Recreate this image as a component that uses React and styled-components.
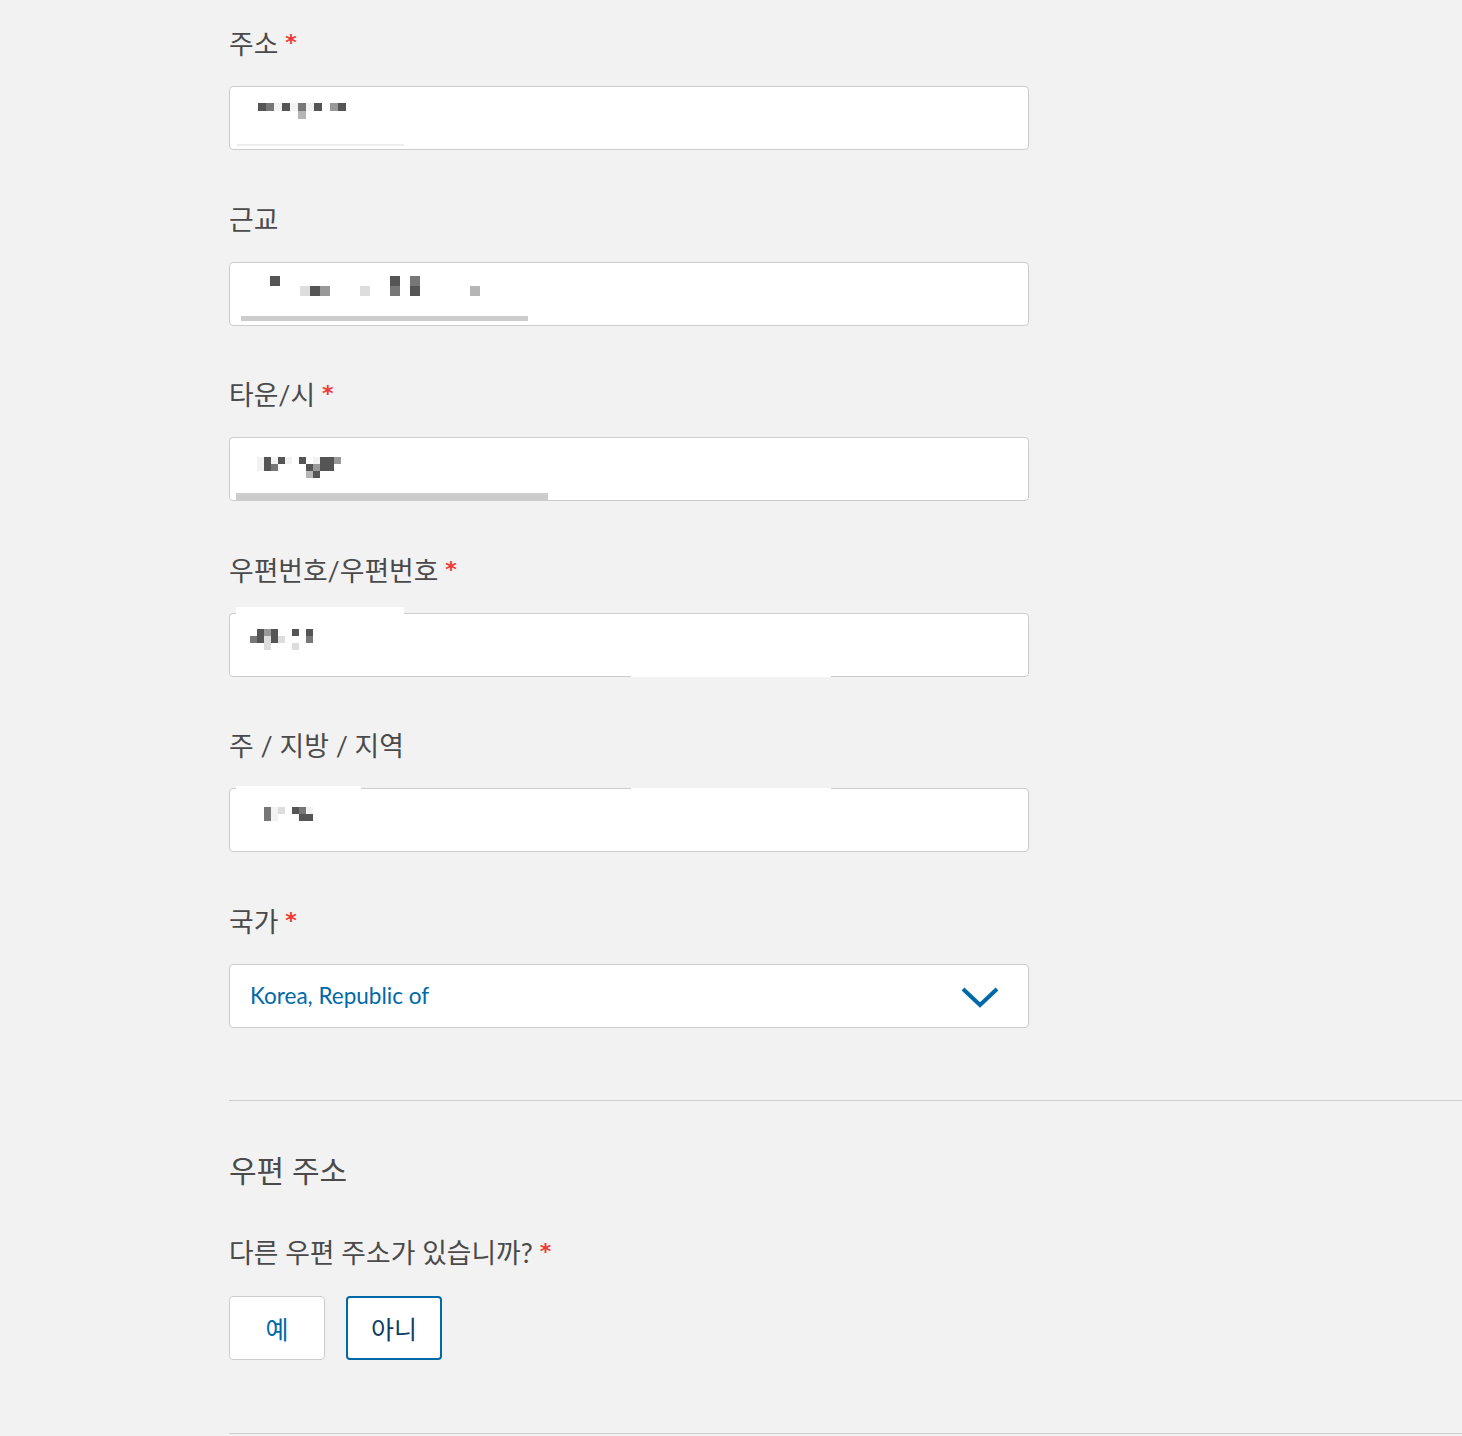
import styled, { createGlobalStyle } from 'styled-components';

const GlobalStyle = createGlobalStyle`
    body {
        margin: 0;
        background: #f2f2f2;
        font-family: Lato, "Noto Sans CJK KR", sans-serif;
    }
`;

const shades = {
    '1': '#555555',
    '2': '#777777',
    '3': '#999999',
    '4': '#b5b5b5',
    '5': '#dddddd',
    '6': '#f2f2f2',
};

// blurred (redacted) values, one string per row of mosaic cells
const fields = [
    {
        label: '주소', required: true,
        mosaic: { cell: 8, x: 29, y: 17, rows: ['12616261 31', '     4'] },
        bars: [{ left: 7, top: 57, width: 167, height: 2, background: '#eeeeee' }],
    },
    {
        label: '근교',
        mosaic: { cell: 10, x: 41, y: 14, rows: ['1           1 2', '   513   5  2 1     4'] },
        bars: [{ left: 11, top: 53, width: 287, height: 5, background: '#cccccc' }],
    },
    {
        label: '타운/시', required: true,
        mosaic: { cell: 7, x: 28, y: 20, rows: ['61616 1 6113', '612    1311', '       41'] },
        bars: [{ left: 6, top: 55, width: 312, height: 7, background: '#cccccc' }],
    },
    {
        label: '우편번호/우편번호', required: true,
        mosaic: { cell: 7, x: 21, y: 16, rows: [' 131  1 1', '21515   2', '  5   5'] },
        bars: [
            { left: 6, top: -7, width: 168, height: 59, background: '#ffffff' },
            { left: 401, top: 61, width: 200, height: 2, background: '#ffffff' },
        ],
    },
    {
        label: '주 / 지방 / 지역',
        mosaic: { cell: 7, x: 35, y: 19, rows: ['265 126', '26   11'] },
        bars: [
            { left: 6, top: -3, width: 125, height: 55, background: '#ffffff' },
            { left: 401, top: -1, width: 200, height: 2, background: '#ffffff' },
        ],
    },
];

function Mosaic({ cell, x, y, rows }) {
    return (
        <MosaicGrid $cell={cell} $x={x} $y={y}>
            {rows.map((row, r) =>
                row.split('').map((ch, c) => (
                    <Cell key={`${r}-${c}`} style={{ gridRow: r + 1, gridColumn: c + 1, background: shades[ch] || 'transparent' }} />
                ))
            )}
        </MosaicGrid>
    );
}

function App() {
    return (
        <>
            <GlobalStyle />
            <Page>
                {fields.map((f) => (
                    <Field key={f.label}>
                        <Label>
                            {f.label}
                            {f.required && <Star>*</Star>}
                        </Label>
                        <InputBox>
                            {f.bars.map((b, i) => <Overlay key={i} style={b} />)}
                            <Mosaic {...f.mosaic} />
                        </InputBox>
                    </Field>
                ))}
                <LastField>
                    <Label>
                        국가<Star>*</Star>
                    </Label>
                    <Select>
                        <span>Korea, Republic of</span>
                        <svg width="38" height="22" viewBox="0 0 38 22">
                            <polyline points="2,3 19,19 36,3" fill="none" stroke="#0069a7" strokeWidth="4" />
                        </svg>
                    </Select>
                </LastField>

                <Section>
                    <Heading>우편 주소</Heading>
                    <Label>
                        다른 우편 주소가 있습니까?<Star>*</Star>
                    </Label>
                    <ButtonRow>
                        <Choice>예</Choice>
                        <Choice $active>아니</Choice>
                    </ButtonRow>
                </Section>
            </Page>
        </>
    );
}

export default App;


const Page = styled.div`
    padding: 28px 0 0 229px;
`;

const Field = styled.div`
    width: 800px;
    margin-bottom: 53.5px;
`;

const LastField = styled(Field)`
    margin-bottom: 0;
`;

const Label = styled.div`
    height: 32px;
    font-size: 26.8px;
    line-height: 32px;
    color: #4a4a4a;
    margin-bottom: 26px;
    white-space: nowrap;
`;

const Star = styled.span`
    display: inline-block;
    vertical-align: top;
    height: 32px;
    margin-left: 7px;
    color: #f03a36;
    font-family: "DejaVu Sans", sans-serif;
    font-weight: 700;
    font-size: 22px;
    line-height: 32px;
    position: relative;
    top: -1px;
`;

const InputBox = styled.div`
    position: relative;
    box-sizing: border-box;
    height: 64px;
    background: #fff;
    border: 1px solid #cccccc;
    border-radius: 4px;
`;

const Overlay = styled.div`
    position: absolute;
`;

const MosaicGrid = styled.div`
    position: relative;
    display: grid;
    grid-auto-columns: ${({ $cell }) => $cell}px;
    grid-auto-rows: ${({ $cell }) => $cell}px;
    width: fit-content;
    margin-left: ${({ $x }) => $x - 1}px;
    padding-top: ${({ $y }) => $y - 1}px;
`;

const Cell = styled.span``;

const Select = styled.div`
    box-sizing: border-box;
    height: 64px;
    background: #fff;
    border: 1px solid #cccccc;
    border-radius: 4px;
    display: flex;
    align-items: center;
    justify-content: space-between;
    padding: 0 29px 0 20px;
    font-size: 22.5px;
    color: #0069a7;

    svg {
        margin-top: 2px;
    }
`;

const Section = styled.section`
    margin-top: 72px;
    border-top: 1px solid #cccccc;
    border-bottom: 1px solid #cccccc;
    padding: 49px 0 73px;

    ${Label} {
        margin-bottom: 27px;
    }
`;

const Heading = styled.h2`
    margin: 0 0 47px;
    font-size: 30px;
    line-height: 40px;
    font-weight: 400;
    color: #4a4a4a;
`;

const ButtonRow = styled.div`
    display: flex;
    gap: 21px;
`;

const Choice = styled.button`
    box-sizing: border-box;
    width: 96px;
    height: 64px;
    background: #fff;
    border: ${({ $active }) => ($active ? '2px solid #0069a7' : '1px solid #cccccc')};
    border-radius: 4px;
    font-family: Lato, "Noto Sans CJK KR", sans-serif;
    font-size: 25px;
    color: ${({ $active }) => ($active ? '#0d3d63' : '#0069a7')};
    cursor: pointer;
`;
